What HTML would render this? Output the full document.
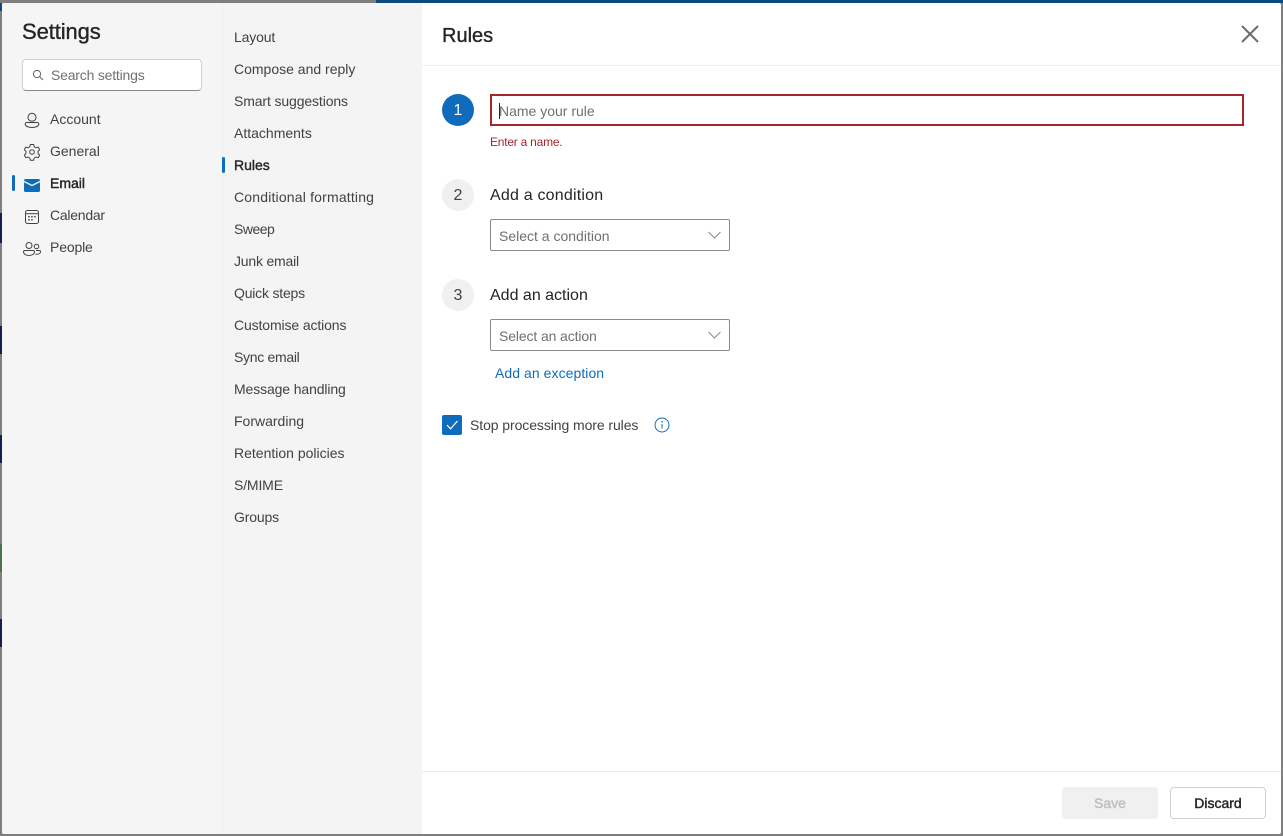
<!DOCTYPE html>
<html><head><meta charset="utf-8"><title>Settings</title>
<style>
html,body{margin:0;padding:0;width:1283px;height:836px;overflow:hidden;background:#7f7f7f;font-family:"Liberation Sans",sans-serif;}
div,span,a{position:absolute;white-space:nowrap;box-sizing:border-box;}
svg{position:absolute;}
.t{font-size:14px;line-height:20px;color:#424242;}
.m{left:234px;}
.s{left:50px;}
.b{color:#242424;-webkit-text-stroke:.4px #242424;}
</style></head><body>
<div style="left:376px;top:0;width:907px;height:3px;background:#0f4a7a"></div>
<div style="left:0;top:3px;width:2px;height:8px;background:#0f4a7a"></div>
<div style="left:0;top:213px;width:2px;height:30px;background:#141e52"></div>
<div style="left:0;top:326px;width:2px;height:28px;background:#141e52"></div>
<div style="left:0;top:435px;width:2px;height:28px;background:#141e52"></div>
<div style="left:0;top:544px;width:2px;height:28px;background:#4c7350"></div>
<div style="left:0;top:619px;width:2px;height:28px;background:#141e52"></div>

<div style="left:2px;top:3px;width:1279px;height:831px;background:#fff;border-radius:2px;overflow:hidden">
<div style="left:0;top:0;width:220px;height:831px;background:#f5f5f5"></div>
<div style="left:220px;top:0;width:200px;height:831px;background:#f4f4f4;border-left:1px solid #f0f0f0"></div>
</div>

<div style="left:22px;top:17px;font-size:22px;line-height:30px;font-weight:400;color:#242424;-webkit-text-stroke:.35px #242424;letter-spacing:-.1px">Settings</div>
<div style="left:22px;top:59px;width:180px;height:32px;background:#fff;border:1px solid #d1d1d1;border-bottom-color:#8a8a8a;border-radius:4px"></div>
<svg style="left:32px;top:69px" width="12" height="12" viewBox="0 0 12 12" fill="none" stroke="#616161" stroke-width="1"><circle cx="5" cy="5" r="3.6"/><path d="M7.700 7.700L11 11"/></svg>
<div class="t" style="left:51px;top:65px;color:#707070;letter-spacing:-.2px">Search settings</div>

<svg style="left:23px;top:111px" width="18" height="18" viewBox="0 0 18 18" fill="none" stroke="#424242" stroke-width="1"><circle cx="9" cy="6.300" r="4"/><path d="M3.700 11.500h10.600a1.500 1.500 0 0 1 1.500 1.500c0 2-2.600 3.500-6.800 3.500S2.200 15 2.200 13a1.500 1.500 0 0 1 1.500-1.500z"/></svg>
<div class="t s" style="top:109px">Account</div>
<svg style="left:23px;top:143px" width="18" height="18" viewBox="0 0 18 18" fill="none" stroke="#424242" stroke-width="1" stroke-linejoin="round"><path d="M7.300 1.500h3.400l.5 2.300 1.700 1 2.300-.7 1.500 2.600-1.700 1.700v2l1.700 1.700-1.500 2.600-2.300-.7-1.700 1-.5 2.300H7.300l-.5-2.300-1.700-1-2.300.7-1.500-2.600 1.700-1.700v-2L1.300 6.700l1.500-2.600 2.300.7 1.700-1z"/><circle cx="9" cy="9" r="2.300"/></svg>
<div class="t s" style="top:141px">General</div>
<div style="left:12px;top:175px;width:3px;height:16px;background:#0f6cbd;border-radius:2px"></div>
<svg style="left:24px;top:179px" width="16" height="13" viewBox="0 0 16 13"><path d="M0 1.800A1.800 1.800 0 0 1 1.800 0h12.400A1.800 1.800 0 0 1 16 1.800L8 5.800z" fill="#0f6cbd"/><path d="M0 3.300l8 4 8-4v7.900a1.800 1.800 0 0 1-1.800 1.800H1.800A1.800 1.800 0 0 1 0 11.200z" fill="#0f6cbd"/></svg>
<div class="t s b" style="top:173px">Email</div>
<svg style="left:25px;top:210px" width="14" height="14" viewBox="0 0 14 14" fill="none" stroke="#424242" stroke-width="1"><rect x=".5" y=".5" width="13" height="13" rx="2"/><path d="M.5 3.700h13" /><g fill="#424242" stroke="none"><rect x="3.200" y="6" width="1.500" height="1.500"/><rect x="6.200" y="6" width="1.500" height="1.500"/><rect x="9.200" y="6" width="1.500" height="1.500"/><rect x="3.200" y="9" width="1.500" height="1.500"/><rect x="6.200" y="9" width="1.500" height="1.500"/></g></svg>
<div class="t s" style="top:205px;letter-spacing:-.25px">Calendar</div>
<svg style="left:23px;top:241px" width="18" height="16" viewBox="0 0 18 16" fill="none" stroke="#424242" stroke-width="1"><circle cx="6" cy="4.500" r="3"/><circle cx="13.500" cy="5.500" r="2.300"/><path d="M1.800 9.500h8.400a1.300 1.300 0 0 1 1.300 1.300c0 2.300-2.300 3.700-5.500 3.700S.5 13.100.5 10.800a1.300 1.300 0 0 1 1.300-1.300z"/><path d="M12.500 13.200c.4.100.7.100 1 .1 2.500 0 4-1.100 4-2.600a1.200 1.200 0 0 0-1.200-1.200h-3.300"/></svg>
<div class="t s" style="top:237px;letter-spacing:-.15px">People</div>

<div class="t m" style="top:27px;letter-spacing:-.15px">Layout</div>
<div class="t m" style="top:59px">Compose and reply</div>
<div class="t m" style="top:91px;letter-spacing:-.12px">Smart suggestions</div>
<div class="t m" style="top:123px">Attachments</div>
<div style="left:222px;top:157px;width:3px;height:16px;background:#0f6cbd;border-radius:2px"></div>
<div class="t m b" style="top:155px">Rules</div>
<div class="t m" style="top:187px;letter-spacing:.18px">Conditional formatting</div>
<div class="t m" style="top:219px;letter-spacing:-.5px">Sweep</div>
<div class="t m" style="top:251px;letter-spacing:-.2px">Junk email</div>
<div class="t m" style="top:283px;letter-spacing:-.2px">Quick steps</div>
<div class="t m" style="top:315px;letter-spacing:-.12px">Customise actions</div>
<div class="t m" style="top:347px;letter-spacing:-.3px">Sync email</div>
<div class="t m" style="top:379px;letter-spacing:-.12px">Message handling</div>
<div class="t m" style="top:411px">Forwarding</div>
<div class="t m" style="top:443px">Retention policies</div>
<div class="t m" style="top:475px;letter-spacing:-.15px">S/MIME</div>
<div class="t m" style="top:507px;letter-spacing:-.15px">Groups</div>

<div style="left:442px;top:22px;font-size:20px;line-height:28px;color:#242424;-webkit-text-stroke:.35px #242424">Rules</div>
<svg style="left:1240px;top:24px" width="20" height="20" viewBox="0 0 20 20" fill="none" stroke="#6a6d75" stroke-width="2"><path d="M2 2l16 16M18 2L2 18"/></svg>
<div style="left:422px;top:65px;width:859px;height:1px;background:#f0f0f0"></div>

<div style="left:442px;top:94px;width:32px;height:32px;border-radius:50%;background:#0f6cbd;color:#fff;font-size:16px;line-height:34px;text-align:center">1</div>
<div style="left:490px;top:94px;width:754px;height:32px;border:2px solid #a4262c;background:#fff"></div>
<div style="left:499px;top:103px;width:1px;height:16px;background:#242424"></div>
<div class="t" style="left:499px;top:101px;color:#707070">Name your rule</div>
<div style="left:490px;top:134px;font-size:12px;line-height:16px;color:#a4262c;letter-spacing:-.23px">Enter a name.</div>

<div style="left:442px;top:179px;width:32px;height:32px;border-radius:50%;background:#f0f0f0;color:#424242;font-size:16px;line-height:34px;text-align:center">2</div>
<div style="left:490px;top:185px;font-size:16px;line-height:22px;color:#242424;letter-spacing:.2px">Add a condition</div>
<div style="left:490px;top:219px;width:240px;height:32px;border:1px solid #8a8a8a;border-radius:2px;background:#fff"></div>
<div class="t" style="left:499px;top:226px;color:#707070">Select a condition</div>
<svg style="left:708px;top:231px" width="13" height="8" viewBox="0 0 13 8" fill="none" stroke="#8a8a8a" stroke-width="1"><path d="M.5 1l6 6 6-6"/></svg>

<div style="left:442px;top:279px;width:32px;height:32px;border-radius:50%;background:#f0f0f0;color:#424242;font-size:16px;line-height:34px;text-align:center">3</div>
<div style="left:490px;top:285px;font-size:16px;line-height:22px;color:#242424">Add an action</div>
<div style="left:490px;top:319px;width:240px;height:32px;border:1px solid #8a8a8a;border-radius:2px;background:#fff"></div>
<div class="t" style="left:499px;top:326px;color:#707070;letter-spacing:-.12px">Select an action</div>
<svg style="left:708px;top:331px" width="13" height="8" viewBox="0 0 13 8" fill="none" stroke="#8a8a8a" stroke-width="1"><path d="M.5 1l6 6 6-6"/></svg>
<div class="t" style="left:495px;top:363px;color:#0f6cbd;letter-spacing:.06px">Add an exception</div>

<div style="left:442px;top:415px;width:20px;height:20px;border-radius:2px;background:#0f6cbd"></div>
<svg style="left:442px;top:415px" width="20" height="20" viewBox="0 0 20 20" fill="none" stroke="#fff" stroke-width="1.200"><path d="M5 10l3.500 3.800L15.500 6"/></svg>
<div class="t" style="left:470px;top:415px;letter-spacing:-.08px">Stop processing more rules</div>
<svg style="left:654px;top:417px" width="16" height="16" viewBox="0 0 16 16" fill="none" stroke="#0f6cbd" stroke-width="1"><circle cx="8" cy="8" r="7"/><path d="M8 7v4.500"/><circle cx="8" cy="4.800" r=".8" fill="#0f6cbd" stroke="none"/></svg>

<div style="left:422px;top:771px;width:859px;height:1px;background:#ebebeb"></div>
<div style="left:1062px;top:787px;width:96px;height:32px;border-radius:4px;background:#f0f0f0;color:#bdbdbd;-webkit-text-stroke:.4px #bdbdbd;font-size:14px;line-height:32px;text-align:center">Save</div>
<div style="left:1170px;top:787px;width:96px;height:32px;border-radius:4px;background:#fff;border:1px solid #d1d1d1;color:#242424;-webkit-text-stroke:.4px #242424;font-size:14px;line-height:30px;text-align:center">Discard</div>
</body></html>
